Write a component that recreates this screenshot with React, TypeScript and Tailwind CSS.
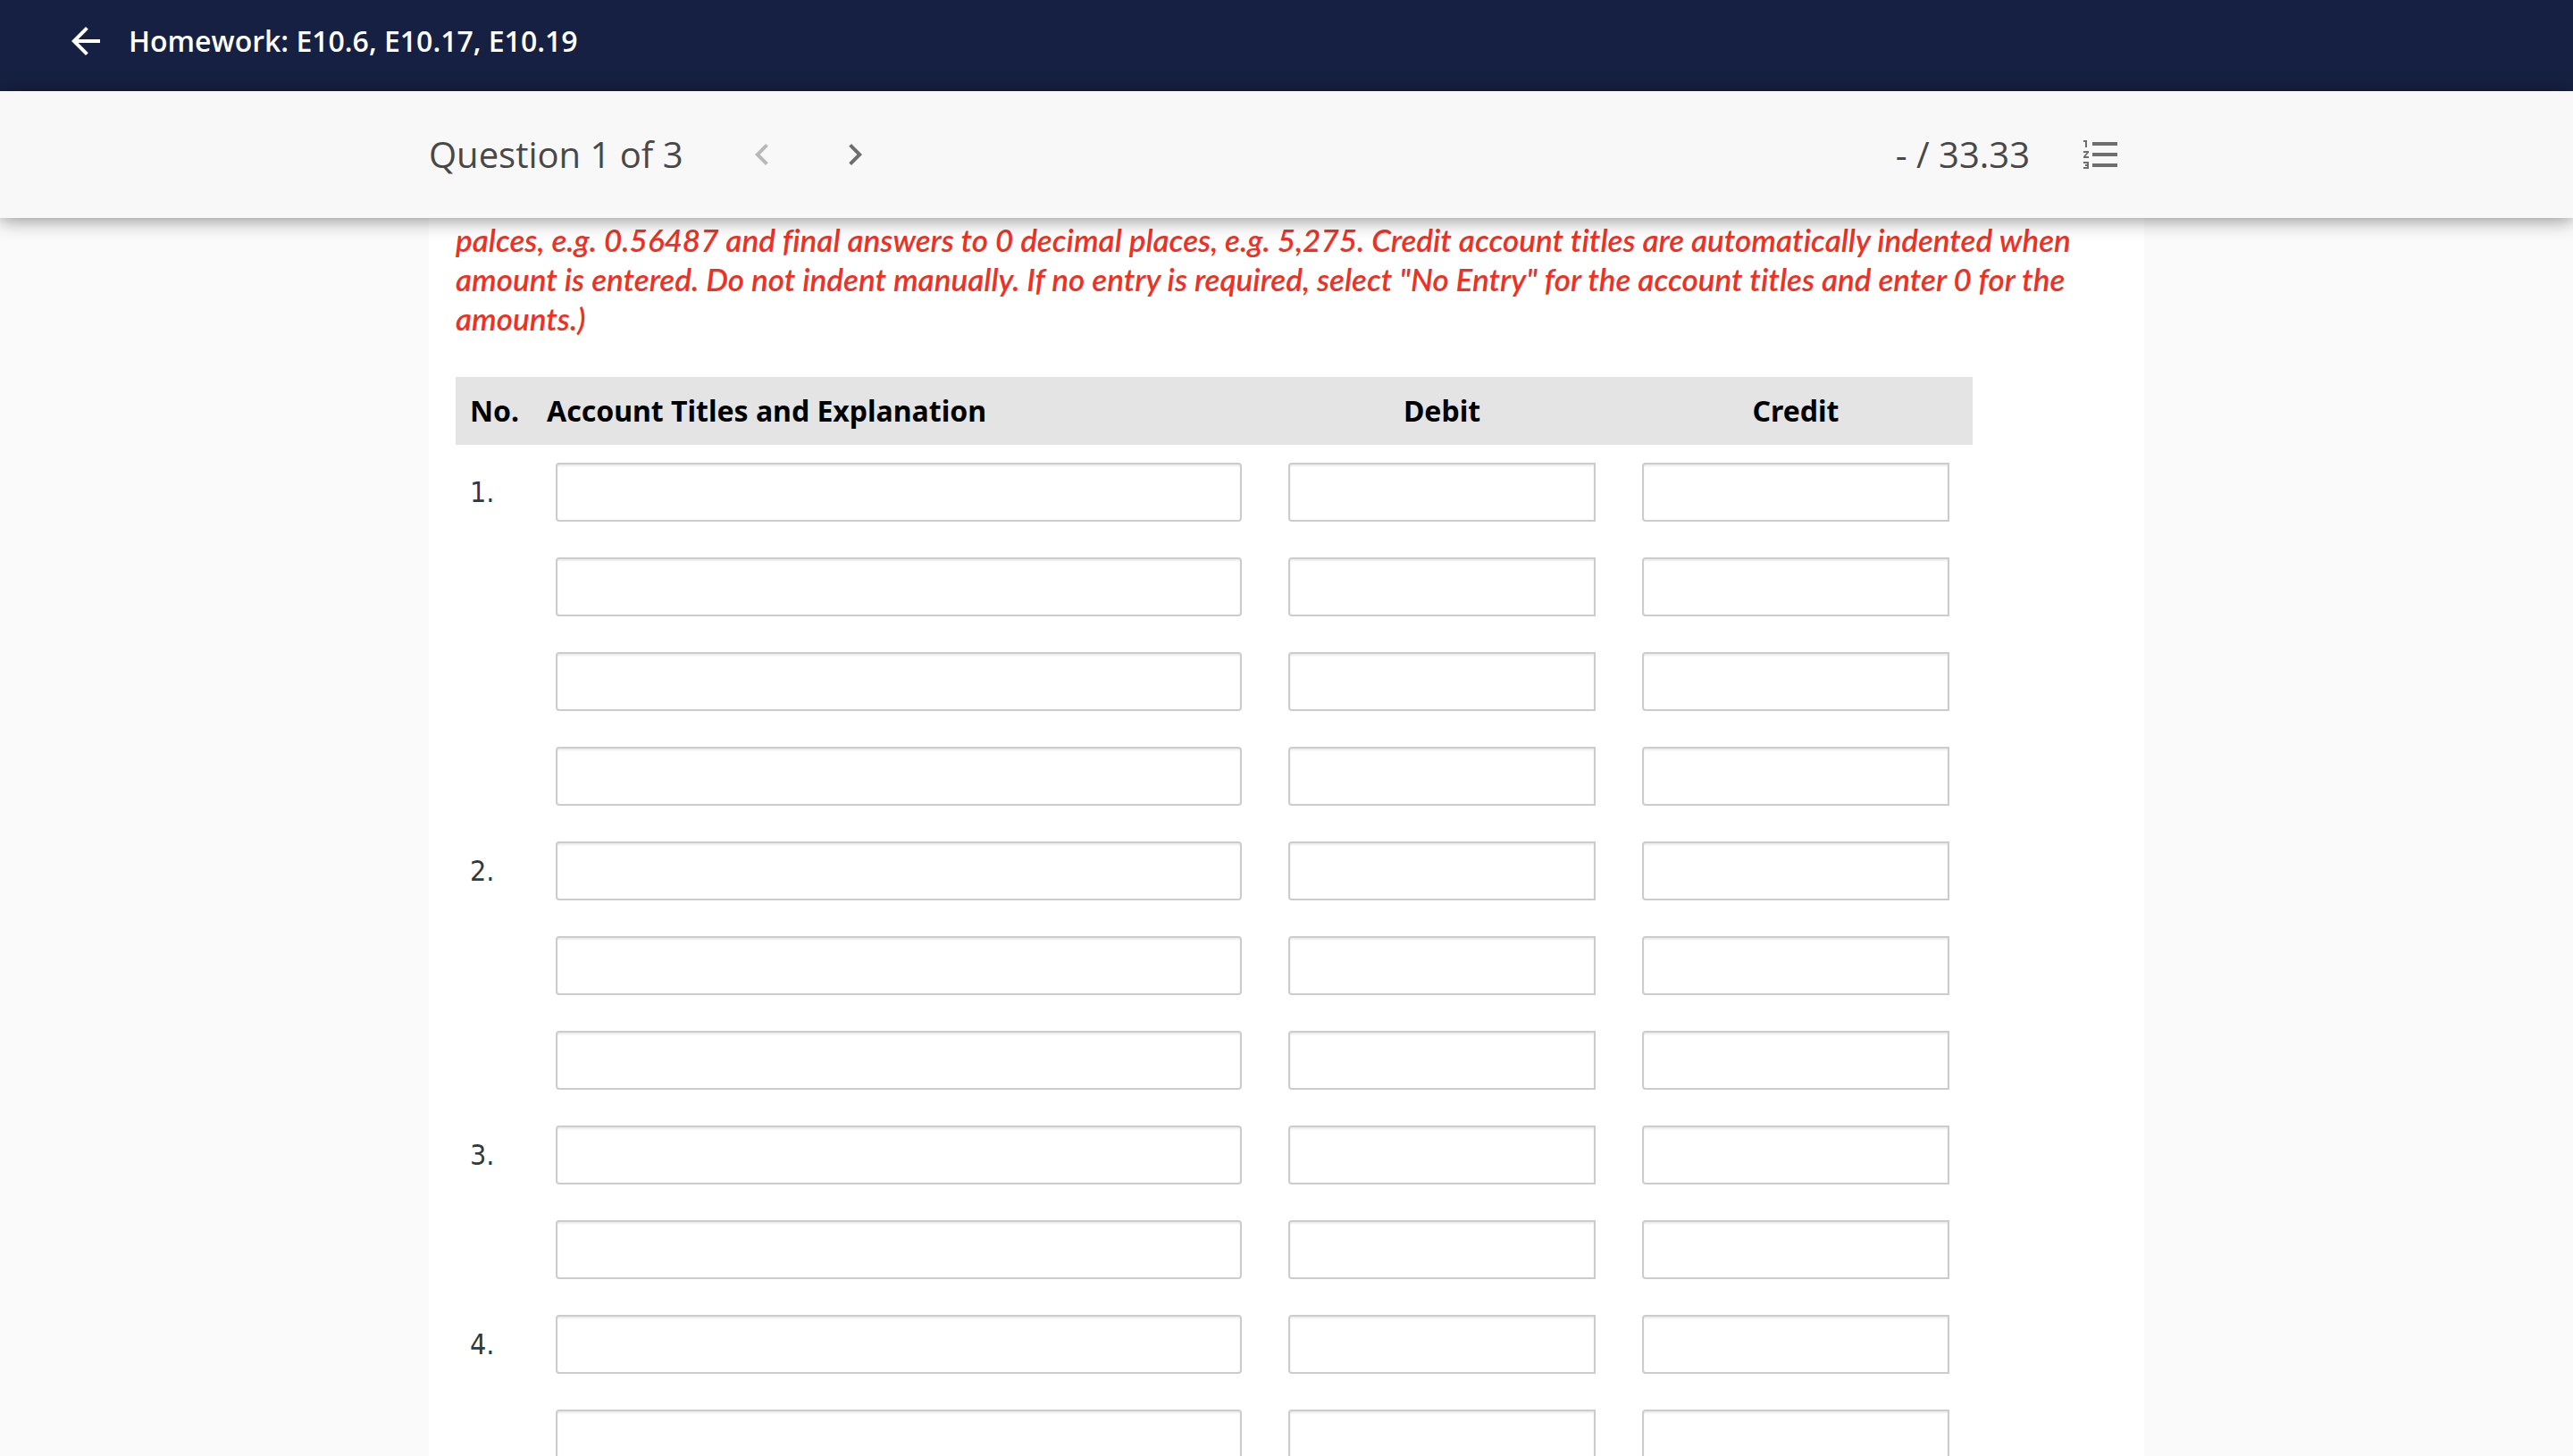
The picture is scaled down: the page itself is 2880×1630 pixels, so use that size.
import { useState } from 'react'
import { MdArrowBack, MdChevronLeft, MdChevronRight, MdFormatListNumbered } from 'react-icons/md'

// number of entry lines in each journal entry
const entries = [
  { no: 1, lines: 4 },
  { no: 2, lines: 3 },
  { no: 3, lines: 2 },
  { no: 4, lines: 2 },
]

const field = 'block h-[66px] w-full border-2 border-[#cccccc] bg-white px-3 text-[30px] text-[#2d3b45] shadow-[inset_0_2px_2px_rgba(0,0,0,0.075)] outline-none focus:border-sky-600'

export default function App() {
  const [question, setQuestion] = useState(1)
  const total = 3

  return (
    <div className="flex h-screen flex-col bg-[#fafafa] font-['Open_Sans',sans-serif]">
      <header className="flex h-[102px] shrink-0 items-start gap-6 bg-[#162042] px-[72px] pt-[22px] text-white">
        <a href="#assignments" aria-label="Back to assignments">
          <MdArrowBack size={48} />
        </a>
        <h1 className="text-[32px] leading-[48px] font-semibold">Homework: E10.6, E10.17, E10.19</h1>
      </header>

      <div className="relative z-10 shrink-0 bg-[#f8f8f8] shadow-[0_2px_20px_rgba(0,0,0,0.45)]">
        <div className="mx-auto flex h-[142px] w-2/3 items-center pr-6 text-[#484848]">
          <h2 className="text-[40px] leading-[48px]">Question {question} of {total}</h2>
          <nav className="ml-16 flex gap-14 text-[#6e6e6e]">
            <button
              aria-label="Previous question"
              disabled={question === 1}
              onClick={() => setQuestion(question - 1)}
              className="disabled:text-[#b8b8b8]"
            >
              <MdChevronLeft size={48} />
            </button>
            <button
              aria-label="Next question"
              disabled={question === total}
              onClick={() => setQuestion(question + 1)}
              className="disabled:text-[#b8b8b8]"
            >
              <MdChevronRight size={48} />
            </button>
          </nav>
          <span className="ml-auto text-[40px] leading-[48px]">- / 33.33</span>
          <button aria-label="Question list" className="ml-14 text-[#6e6e6e]">
            <MdFormatListNumbered size={48} />
          </button>
        </div>
      </div>

      <main className="min-h-0 flex-1 overflow-y-auto [scrollbar-width:none]">
        <div className="mx-auto w-2/3 bg-white px-[30px] pt-[2px]">
          <p className="mb-11 font-['Lato',sans-serif] text-[35px] leading-[44px] font-semibold text-[#ee3124] italic [font-variant-ligatures:no-common-ligatures]">
            palces, e.g. 0.56487 and final answers to 0 decimal places, e.g. 5,275. Credit account titles are
            automatically indented when amount is entered. Do not indent manually. If no entry is required, select
            "No Entry" for the account titles and enter 0 for the amounts.)
          </p>

          <div className="pr-[162px]">
            <table className="w-full table-fixed font-['DejaVu_Sans_Condensed','DejaVu_Sans',sans-serif]">
              <colgroup>
                <col className="w-[86px]" />
                <col />
                <col className="w-[396px]" />
                <col className="w-[396px]" />
              </colgroup>
              <thead className="bg-[#e4e4e4] font-['Noto_Sans',sans-serif] text-[32px] leading-[44px] text-black">
                <tr className="h-[76px]">
                  <th className="pl-4 text-left">No.</th>
                  <th className="px-4 text-left">Account Titles and Explanation</th>
                  <th>Debit</th>
                  <th>Credit</th>
                </tr>
              </thead>
              {entries.map(entry => (
                <tbody key={entry.no}>
                  {Array.from({ length: entry.lines }, (_, i) => (
                    <tr key={i}>
                      <td className="pl-4 text-[32px] leading-[44px] text-[#2d3b45]">{i === 0 && `${entry.no}.`}</td>
                      <td className="px-[26px] py-5">
                        <input type="text" aria-label={`Entry ${entry.no} line ${i + 1} account title`} className={`${field} rounded`} />
                      </td>
                      <td className="px-[26px] py-5">
                        <input type="text" aria-label={`Entry ${entry.no} line ${i + 1} debit`} className={`${field} rounded-l`} />
                      </td>
                      <td className="px-[26px] py-5">
                        <input type="text" aria-label={`Entry ${entry.no} line ${i + 1} credit`} className={`${field} rounded-l`} />
                      </td>
                    </tr>
                  ))}
                </tbody>
              ))}
            </table>
          </div>
        </div>
      </main>
    </div>
  )
}
